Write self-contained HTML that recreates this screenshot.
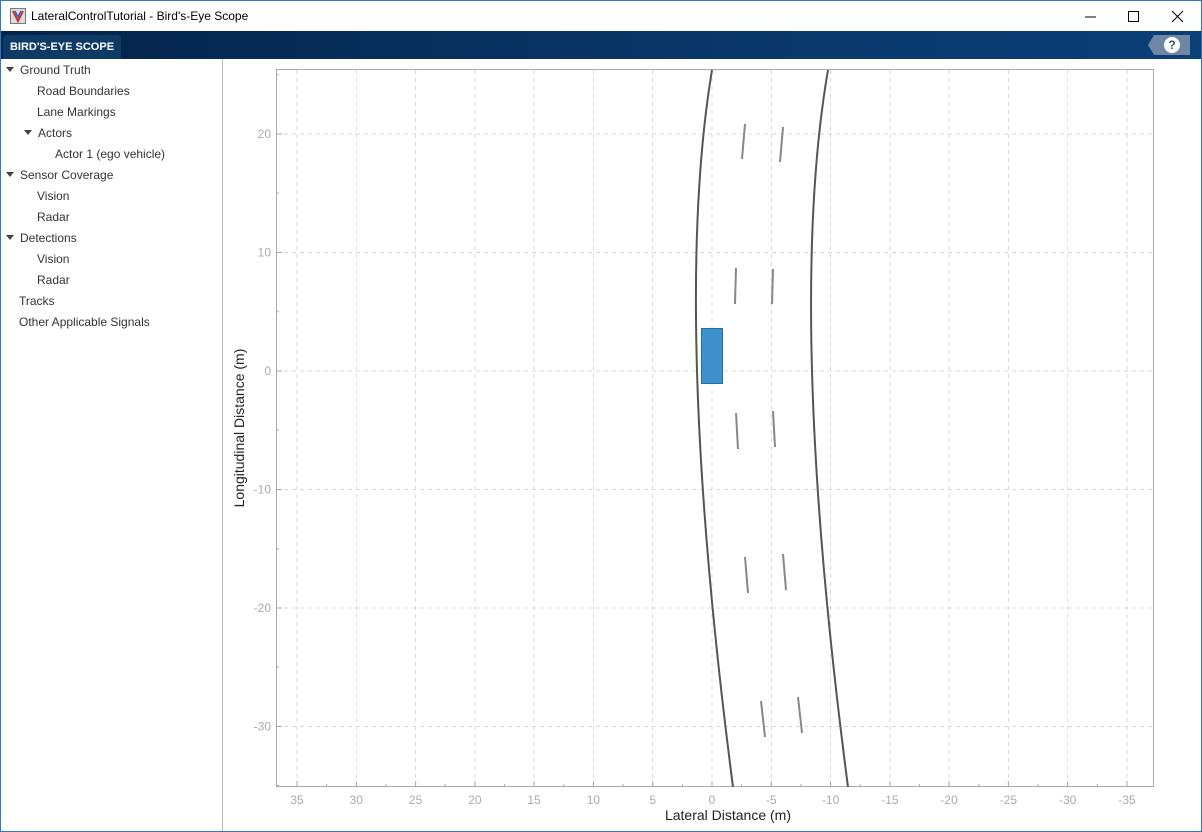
<!DOCTYPE html>
<html><head><style>
html,body{margin:0;padding:0;width:1202px;height:832px;overflow:hidden;background:#fff;font-family:"Liberation Sans",sans-serif;}
.win{position:absolute;left:0;top:0;width:1200px;height:830px;border:1px solid #2b79c2;}
.title{position:absolute;left:0;top:0;width:1200px;height:30px;background:#fff;font-size:12px;color:#000;}
.title span{position:absolute;left:30px;top:8px;}
.tb{position:absolute;left:0;top:30px;width:1200px;height:28px;background:linear-gradient(90deg,#03244a,#0a3a6e 70%,#0b3f78);}
.tab{position:absolute;left:2px;top:4px;width:118px;height:24px;background:#0e3a66;border-radius:4px 4px 0 0;color:#fff;font-weight:bold;font-size:11px;line-height:24px;text-align:center;}
.help{position:absolute;left:1147px;top:4px;width:42px;height:20px;background:#6f87a4;clip-path:polygon(6px 0,100% 0,100% 100%,6px 100%,0 50%);}
.help div{position:absolute;left:16px;top:2px;width:16px;height:16px;border-radius:50%;background:#fff;color:#3a4e66;font-weight:bold;font-size:12px;text-align:center;line-height:16px;}
.side{position:absolute;left:0;top:58px;width:221px;height:772px;border-right:1px solid #bbb;font-size:12px;color:#333;}
.side div{position:absolute;white-space:nowrap;}
.tri{display:inline-block;width:0;height:0;border-left:4px solid transparent;border-right:4px solid transparent;border-top:5px solid #444;margin-right:6px;vertical-align:2px;}
</style></head><body>
<div class="win">
<div class="title">
<svg style="position:absolute;left:9px;top:7px" width="16" height="16"><rect x="0.5" y="0.5" width="15" height="15" fill="#ddd" stroke="#777"/><path d="M3 3 L8 13 L13 3" stroke="#c33" stroke-width="2" fill="none"/><path d="M5 3 L8 9 L11 3" stroke="#36c" stroke-width="1.5" fill="none"/></svg>
<span>LateralControlTutorial - Bird's-Eye Scope</span>
<svg style="position:absolute;left:1080px;top:8px" width="110" height="16"><line x1="4" y1="8" x2="15" y2="8" stroke="#000"/><rect x="47.5" y="2.5" width="10" height="10" fill="none" stroke="#000"/><path d="M91 2 L102 13 M102 2 L91 13" stroke="#000"/></svg>
</div>
<div class="tb"><div class="tab">BIRD'S-EYE SCOPE</div><div class="help"><div>?</div></div></div>
<div class="side">
<div style="left:5px;top:4px"><span class="tri"></span>Ground Truth</div>
<div style="left:36px;top:25px">Road Boundaries</div>
<div style="left:36px;top:46px">Lane Markings</div>
<div style="left:23px;top:67px"><span class="tri"></span>Actors</div>
<div style="left:54px;top:88px">Actor 1 (ego vehicle)</div>
<div style="left:5px;top:109px"><span class="tri"></span>Sensor Coverage</div>
<div style="left:36px;top:130px">Vision</div>
<div style="left:36px;top:151px">Radar</div>
<div style="left:5px;top:172px"><span class="tri"></span>Detections</div>
<div style="left:36px;top:193px">Vision</div>
<div style="left:36px;top:214px">Radar</div>
<div style="left:18px;top:235px">Tracks</div>
<div style="left:18px;top:256px">Other Applicable Signals</div>
</div>
</div>
<svg style="position:absolute;left:0;top:0" width="1202" height="832" font-family="Liberation Sans, sans-serif">
<g stroke="#d8d8d8" stroke-dasharray="4,4" stroke-width="1">
<line x1="297" y1="70" x2="297" y2="787"/><line x1="356.3" y1="70" x2="356.3" y2="787"/><line x1="415.6" y1="70" x2="415.6" y2="787"/><line x1="474.9" y1="70" x2="474.9" y2="787"/><line x1="534.1" y1="70" x2="534.1" y2="787"/><line x1="593.4" y1="70" x2="593.4" y2="787"/><line x1="652.7" y1="70" x2="652.7" y2="787"/><line x1="712" y1="70" x2="712" y2="787"/><line x1="771.3" y1="70" x2="771.3" y2="787"/><line x1="830.6" y1="70" x2="830.6" y2="787"/><line x1="889.9" y1="70" x2="889.9" y2="787"/><line x1="949.1" y1="70" x2="949.1" y2="787"/><line x1="1008.4" y1="70" x2="1008.4" y2="787"/><line x1="1067.7" y1="70" x2="1067.7" y2="787"/><line x1="1127" y1="70" x2="1127" y2="787"/>
<line x1="276" y1="134" x2="1154" y2="134"/><line x1="276" y1="252.5" x2="1154" y2="252.5"/><line x1="276" y1="371" x2="1154" y2="371"/><line x1="276" y1="489.5" x2="1154" y2="489.5"/><line x1="276" y1="608" x2="1154" y2="608"/><line x1="276" y1="726.5" x2="1154" y2="726.5"/>
</g>
<rect x="276.5" y="69.5" width="877" height="717" fill="none" stroke="#aaa"/>
<g stroke="#aaa">
<path d="M297 787v-6M356.3 787v-6M415.6 787v-6M474.9 787v-6M534.1 787v-6M593.4 787v-6M652.7 787v-6M712 787v-6M771.3 787v-6M830.6 787v-6M889.9 787v-6M949.1 787v-6M1008.4 787v-6M1067.7 787v-6M1127 787v-6"/>
<path d="M326.6 787v-3M386 787v-3M445.2 787v-3M504.5 787v-3M563.8 787v-3M623 787v-3M682.3 787v-3M741.6 787v-3M801 787v-3M860.2 787v-3M919.5 787v-3M978.8 787v-3M1038 787v-3M1097.3 787v-3"/>
<path d="M276 134h6M276 252.5h6M276 371h6M276 489.5h6M276 608h6M276 726.5h6M276 193h3M276 311.7h3M276 430h3M276 548.7h3M276 667h3M276 74.7h3M276 785.5h3"/>
</g>
<g fill="#aaa" font-size="12" text-anchor="middle">
<text x="297" y="804">35</text><text x="356.3" y="804">30</text><text x="415.6" y="804">25</text><text x="474.9" y="804">20</text><text x="534.1" y="804">15</text><text x="593.4" y="804">10</text><text x="652.7" y="804">5</text><text x="712" y="804">0</text><text x="771.3" y="804">-5</text><text x="830.6" y="804">-10</text><text x="889.9" y="804">-15</text><text x="949.1" y="804">-20</text><text x="1008.4" y="804">-25</text><text x="1067.7" y="804">-30</text><text x="1127" y="804">-35</text>
</g>
<g fill="#aaa" font-size="12" text-anchor="end">
<text x="271" y="138">20</text><text x="271" y="256.5">10</text><text x="271" y="375">0</text><text x="271" y="493.5">-10</text><text x="271" y="612">-20</text><text x="271" y="730.5">-30</text>
</g>
<text x="728" y="820" font-size="14" fill="#222" text-anchor="middle">Lateral Distance (m)</text>
<text transform="translate(244,428) rotate(-90)" font-size="14" fill="#222" text-anchor="middle">Longitudinal Distance (m)</text>
<g fill="none" stroke="#555" stroke-width="2">
<path d="M712 70 Q671.5 313.5 733 787"/>
<path d="M828 70 Q786 313.5 848 787"/>
</g>
<g stroke="#888" stroke-width="2">
<path d="M745 124L742 159M783 127L780 162M736 268L735 304M773 269L772 304M736 413L738 449M773 411L775 447M745 557L748 593M783 554L786 590M761 701L765 737M798 697L802 733"/>
</g>
<rect x="701.5" y="328.5" width="21" height="55" fill="#3f91cc" stroke="#1f6fae"/>
</svg>
</body></html>
